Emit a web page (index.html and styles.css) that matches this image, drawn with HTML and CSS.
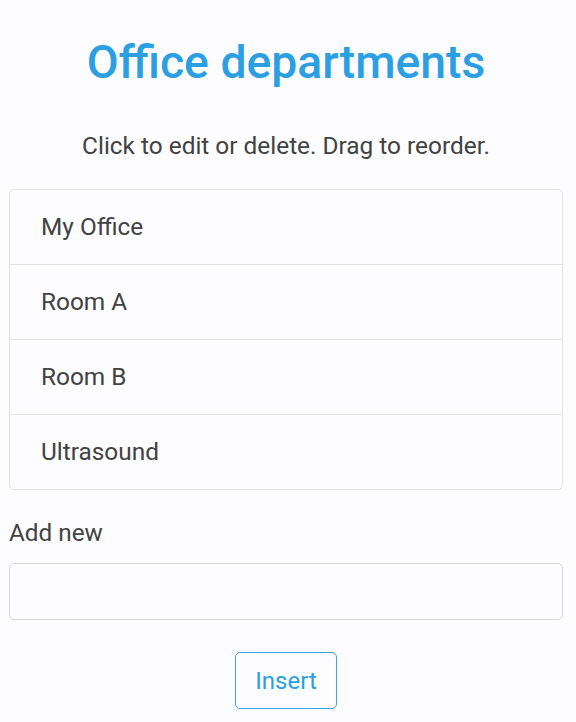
FILE: index.html
```html
<!DOCTYPE html>
<html>
<head>
<meta charset="utf-8">
<link rel="stylesheet" href="styles.css">
</head>
<body>
<div class="page">
  <h1 class="title">Office departments</h1>
  <p class="hint">Click to edit or delete. Drag to reorder.</p>
  <ul class="list">
    <li class="item">My Office</li>
    <li class="item">Room A</li>
    <li class="item">Room B</li>
    <li class="item">Ultrasound</li>
  </ul>
  <label class="label" for="newdep">Add new</label>
  <input class="field" id="newdep" type="text">
  <div class="actions">
    <button class="btn">Insert</button>
  </div>
</div>
</body>
</html>
```

FILE: styles.css
```css
html, body {
  margin: 0;
  padding: 0;
  background: #fdfcfe;
}
body {
  font-family: Roboto, "Noto Sans", sans-serif;
  color: #424242;
}
.page {
  padding: 36px 13px 0 9px;
  display: flex;
  flex-direction: column;
}
.title {
  margin: 0;
  font-size: 46.3px;
  line-height: 52px;
  font-weight: 500;
  color: #2b9fe2;
  text-align: center;
}
.hint {
  margin: 44px 0 0;
  font-size: 24.4px;
  line-height: 28px;
  text-align: center;
}
.list {
  list-style: none;
  margin: 29px 0 0;
  padding: 0;
  border: 1px solid #e2e2e4;
  border-radius: 5px;
}
.item {
  height: 75px;
  box-sizing: border-box;
  display: flex;
  align-items: center;
  padding: 0 0 2px 31px;
  font-size: 24.4px;
  border-top: 1px solid #e2e2e4;
}
.item:first-child {
  border-top: none;
  height: 74px;
}
.label {
  margin-top: 28px;
  font-size: 24.3px;
  line-height: 30px;
}
.field {
  margin-top: 15px;
  height: 57px;
  box-sizing: border-box;
  border: 1px solid #d6d6d8;
  border-radius: 5px;
  background: #fdfcfe;
}
.actions {
  display: flex;
  justify-content: center;
  margin-top: 32px;
}
.btn {
  width: 102px;
  height: 57px;
  box-sizing: border-box;
  border: 1px solid #3aa3e3;
  border-radius: 5px;
  background: #fdfcfe;
  color: #2b9fe2;
  font-family: Roboto, sans-serif;
  font-size: 24px;
}
```
